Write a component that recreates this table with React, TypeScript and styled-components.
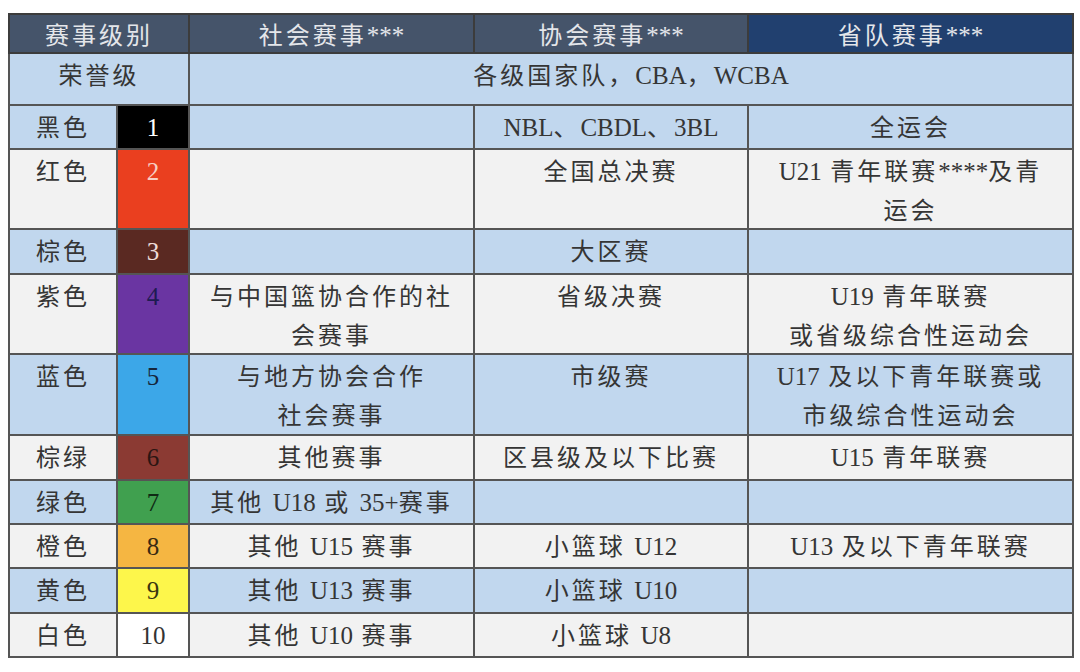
import React from 'react'
import styled, { createGlobalStyle } from 'styled-components'

const GlobalStyle = createGlobalStyle`
    html, body {
        margin: 0;
        padding: 0;
        background: #ffffff;
    }
    body {
        padding: 13px 8px;
        font-family: "Noto Sans CJK SC", "Liberation Serif", serif;
    }
`

const Table = styled.table`
    width: 1064px;
    border-collapse: collapse;
    table-layout: fixed;
    color: #353535;
    font-size: 24px;
    letter-spacing: 3px;
    border: 2px solid #5a5a5a;
`

const HeadCell = styled.th<{ $navy?: boolean }>`
    height: 37px;
    padding: 0;
    background: ${p => (p.$navy ? '#21406f' : '#45546a')};
    color: #e4e6ea;
    font-weight: 400;
    line-height: 37px;
    text-align: center;
    vertical-align: middle;
    border: 2px solid #3c3c3c;
    white-space: nowrap;
`

const Row = styled.tr<{ $tone: 'blue' | 'gray'; $h: number }>`
    height: ${p => p.$h}px;
    background: ${p => (p.$tone === 'blue' ? '#c1d7ee' : '#f2f2f2')};
`

const Cell = styled.td`
    padding: 0;
    line-height: 39px;
    text-align: center;
    vertical-align: top;
    border: 2px solid #555555;
    white-space: nowrap;
`

const Swatch = styled(Cell)<{ $bg: string; $fg: string }>`
    background: ${p => p.$bg};
    color: ${p => p.$fg};
`

const Latin = styled.span`
    font-family: "Liberation Serif", serif;
    font-size: 25px;
    line-height: 1;
    letter-spacing: 0;
`

const mixed = (text: string) =>
    text.split(/([\x21-\x7E]+(?: [\x21-\x7E]+)*)/).map((part, i) =>
        /[\x21-\x7E]/.test(part) ? <Latin key={i}>{part}</Latin> : part
    )

const lines = (value: string | string[]) => {
    const list = Array.isArray(value) ? value : [value]
    return list.map((line, i) => (
        <React.Fragment key={i}>
            {i > 0 && <br />}
            {mixed(line)}
        </React.Fragment>
    ))
}

interface LevelRow {
    name: string
    num: string
    swatch: string
    numColor: string
    tone: 'blue' | 'gray'
    height: number
    social: string | string[]
    assoc: string | string[]
    province: string | string[]
}

const rows: LevelRow[] = [
    { name: '黑色', num: '1', swatch: '#000000', numColor: '#ffffff', tone: 'blue', height: 44, social: '', assoc: 'NBL、CBDL、3BL', province: '全运会' },
    { name: '红色', num: '2', swatch: '#ea3f1f', numColor: '#f7cfc4', tone: 'gray', height: 80, social: '', assoc: '全国总决赛', province: ['U21 青年联赛****及青', '运会'] },
    { name: '棕色', num: '3', swatch: '#5a2922', numColor: '#eedcd8', tone: 'blue', height: 45, social: '', assoc: '大区赛', province: '' },
    { name: '紫色', num: '4', swatch: '#6a35a2', numColor: '#1e1b52', tone: 'gray', height: 79, social: ['与中国篮协合作的社', '会赛事'], assoc: '省级决赛', province: ['U19 青年联赛', '或省级综合性运动会'] },
    { name: '蓝色', num: '5', swatch: '#3ca7e8', numColor: '#16263a', tone: 'blue', height: 81, social: ['与地方协会合作', '社会赛事'], assoc: '市级赛', province: ['U17 及以下青年联赛或', '市级综合性运动会'] },
    { name: '棕绿', num: '6', swatch: '#8b3a33', numColor: '#2a1512', tone: 'gray', height: 45, social: '其他赛事', assoc: '区县级及以下比赛', province: 'U15 青年联赛' },
    { name: '绿色', num: '7', swatch: '#40a04f', numColor: '#0f2a14', tone: 'blue', height: 44, social: '其他 U18 或 35+赛事', assoc: '', province: '' },
    { name: '橙色', num: '8', swatch: '#f5b642', numColor: '#3a2a12', tone: 'gray', height: 44, social: '其他 U15 赛事', assoc: '小篮球 U12', province: 'U13 及以下青年联赛' },
    { name: '黄色', num: '9', swatch: '#fdf64b', numColor: '#3a3510', tone: 'blue', height: 45, social: '其他 U13 赛事', assoc: '小篮球 U10', province: '' },
    { name: '白色', num: '10', swatch: '#ffffff', numColor: '#333333', tone: 'gray', height: 44, social: '其他 U10 赛事', assoc: '小篮球 U8', province: '' },
]

const App = () => {
    return (
        <>
            <GlobalStyle />
            <Table>
                <colgroup>
                    <col style={{ width: 108 }} />
                    <col style={{ width: 72 }} />
                    <col style={{ width: 285 }} />
                    <col style={{ width: 274 }} />
                    <col style={{ width: 325 }} />
                </colgroup>
                <thead>
                    <tr>
                        <HeadCell colSpan={2}>赛事级别</HeadCell>
                        <HeadCell>{mixed('社会赛事***')}</HeadCell>
                        <HeadCell>{mixed('协会赛事***')}</HeadCell>
                        <HeadCell $navy>{mixed('省队赛事***')}</HeadCell>
                    </tr>
                </thead>
                <tbody>
                    <Row $tone="blue" $h={52}>
                        <Cell colSpan={2}>荣誉级</Cell>
                        <Cell colSpan={3}>{mixed('各级国家队，CBA，WCBA')}</Cell>
                    </Row>
                    {rows.map(row => (
                        <Row key={row.num} $tone={row.tone} $h={row.height}>
                            <Cell>{row.name}</Cell>
                            <Swatch $bg={row.swatch} $fg={row.numColor}>{mixed(row.num)}</Swatch>
                            <Cell>{lines(row.social)}</Cell>
                            <Cell>{lines(row.assoc)}</Cell>
                            <Cell>{lines(row.province)}</Cell>
                        </Row>
                    ))}
                </tbody>
            </Table>
        </>
    )
}

export default App
